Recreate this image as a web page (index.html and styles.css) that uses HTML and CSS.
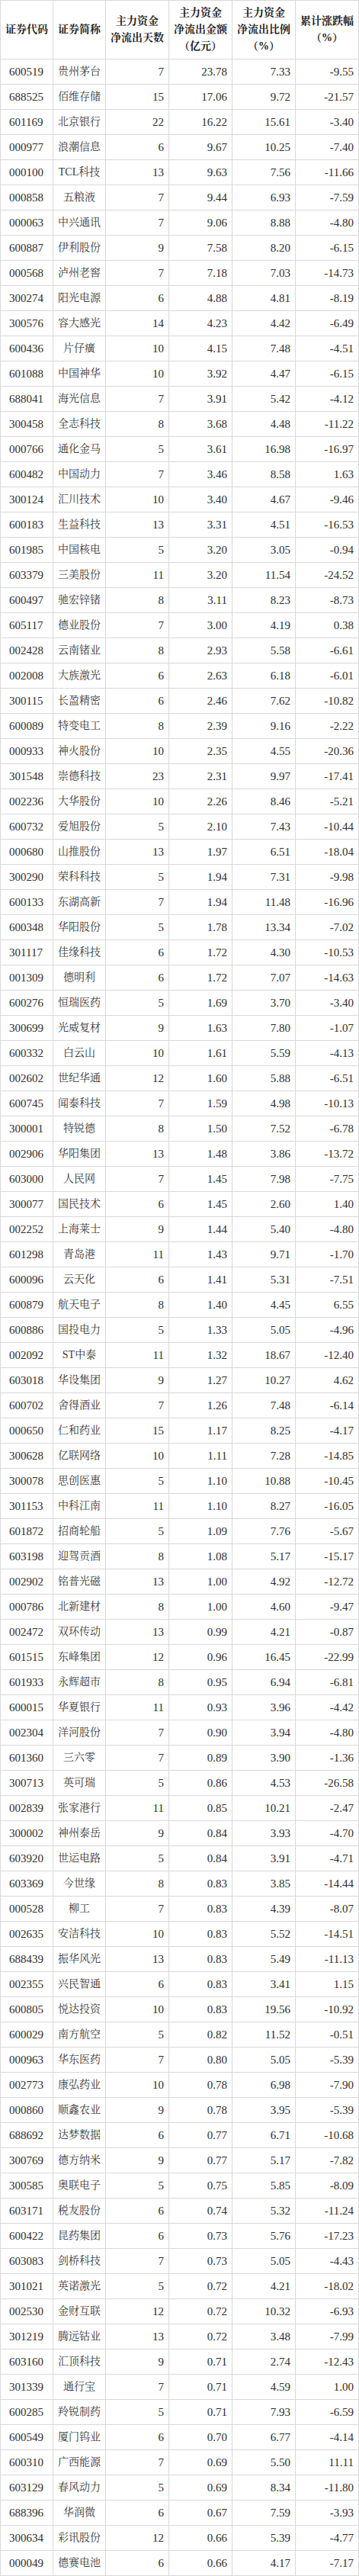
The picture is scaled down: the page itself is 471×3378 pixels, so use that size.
FILE: index.html
```html
<!DOCTYPE html>
<html lang="zh-CN">
<head>
<meta charset="utf-8">
<title>主力资金净流出</title>
<link rel="stylesheet" href="styles.css">
</head>
<body>
<table class="flow">
<colgroup>
<col class="c-code"><col class="c-name"><col class="c-num"><col class="c-num"><col class="c-num"><col class="c-num">
</colgroup>
<thead>
<tr><th>证券代码</th><th>证券简称</th><th>主力资金<br>净流出天数</th><th>主力资金<br>净流出金额<br>（亿元）</th><th>主力资金<br>净流出比例<br>（%）</th><th>累计涨跌幅<br>（%）</th></tr>
</thead>
<tbody>
<tr><td class="code">600519</td><td class="name">贵州茅台</td><td>7</td><td>23.78</td><td>7.33</td><td>-9.55</td></tr>
<tr><td class="code">688525</td><td class="name">佰维存储</td><td>15</td><td>17.06</td><td>9.72</td><td>-21.57</td></tr>
<tr><td class="code">601169</td><td class="name">北京银行</td><td>22</td><td>16.22</td><td>15.61</td><td>-3.40</td></tr>
<tr><td class="code">000977</td><td class="name">浪潮信息</td><td>6</td><td>9.67</td><td>10.25</td><td>-7.40</td></tr>
<tr><td class="code">000100</td><td class="name">TCL科技</td><td>13</td><td>9.63</td><td>7.56</td><td>-11.66</td></tr>
<tr><td class="code">000858</td><td class="name">五粮液</td><td>7</td><td>9.44</td><td>6.93</td><td>-7.59</td></tr>
<tr><td class="code">000063</td><td class="name">中兴通讯</td><td>7</td><td>9.06</td><td>8.88</td><td>-4.80</td></tr>
<tr><td class="code">600887</td><td class="name">伊利股份</td><td>9</td><td>7.58</td><td>8.20</td><td>-6.15</td></tr>
<tr><td class="code">000568</td><td class="name">泸州老窖</td><td>7</td><td>7.18</td><td>7.03</td><td>-14.73</td></tr>
<tr><td class="code">300274</td><td class="name">阳光电源</td><td>6</td><td>4.88</td><td>4.81</td><td>-8.19</td></tr>
<tr><td class="code">300576</td><td class="name">容大感光</td><td>14</td><td>4.23</td><td>4.42</td><td>-6.49</td></tr>
<tr><td class="code">600436</td><td class="name">片仔癀</td><td>10</td><td>4.15</td><td>7.48</td><td>-4.51</td></tr>
<tr><td class="code">601088</td><td class="name">中国神华</td><td>10</td><td>3.92</td><td>4.47</td><td>-6.15</td></tr>
<tr><td class="code">688041</td><td class="name">海光信息</td><td>7</td><td>3.91</td><td>5.42</td><td>-4.12</td></tr>
<tr><td class="code">300458</td><td class="name">全志科技</td><td>8</td><td>3.68</td><td>4.48</td><td>-11.22</td></tr>
<tr><td class="code">000766</td><td class="name">通化金马</td><td>5</td><td>3.61</td><td>16.98</td><td>-16.97</td></tr>
<tr><td class="code">600482</td><td class="name">中国动力</td><td>7</td><td>3.46</td><td>8.58</td><td>1.63</td></tr>
<tr><td class="code">300124</td><td class="name">汇川技术</td><td>10</td><td>3.40</td><td>4.67</td><td>-9.46</td></tr>
<tr><td class="code">600183</td><td class="name">生益科技</td><td>13</td><td>3.31</td><td>4.51</td><td>-16.53</td></tr>
<tr><td class="code">601985</td><td class="name">中国核电</td><td>5</td><td>3.20</td><td>3.05</td><td>-0.94</td></tr>
<tr><td class="code">603379</td><td class="name">三美股份</td><td>11</td><td>3.20</td><td>11.54</td><td>-24.52</td></tr>
<tr><td class="code">600497</td><td class="name">驰宏锌锗</td><td>8</td><td>3.11</td><td>8.23</td><td>-8.73</td></tr>
<tr><td class="code">605117</td><td class="name">德业股份</td><td>7</td><td>3.00</td><td>4.19</td><td>0.38</td></tr>
<tr><td class="code">002428</td><td class="name">云南锗业</td><td>8</td><td>2.93</td><td>5.58</td><td>-6.61</td></tr>
<tr><td class="code">002008</td><td class="name">大族激光</td><td>6</td><td>2.63</td><td>6.18</td><td>-6.01</td></tr>
<tr><td class="code">300115</td><td class="name">长盈精密</td><td>6</td><td>2.46</td><td>7.62</td><td>-10.82</td></tr>
<tr><td class="code">600089</td><td class="name">特变电工</td><td>8</td><td>2.39</td><td>9.16</td><td>-2.22</td></tr>
<tr><td class="code">000933</td><td class="name">神火股份</td><td>10</td><td>2.35</td><td>4.55</td><td>-20.36</td></tr>
<tr><td class="code">301548</td><td class="name">崇德科技</td><td>23</td><td>2.31</td><td>9.97</td><td>-17.41</td></tr>
<tr><td class="code">002236</td><td class="name">大华股份</td><td>10</td><td>2.26</td><td>8.46</td><td>-5.21</td></tr>
<tr><td class="code">600732</td><td class="name">爱旭股份</td><td>5</td><td>2.10</td><td>7.43</td><td>-10.44</td></tr>
<tr><td class="code">000680</td><td class="name">山推股份</td><td>13</td><td>1.97</td><td>6.51</td><td>-18.04</td></tr>
<tr><td class="code">300290</td><td class="name">荣科科技</td><td>5</td><td>1.94</td><td>7.31</td><td>-9.98</td></tr>
<tr><td class="code">600133</td><td class="name">东湖高新</td><td>7</td><td>1.94</td><td>11.48</td><td>-16.96</td></tr>
<tr><td class="code">600348</td><td class="name">华阳股份</td><td>5</td><td>1.78</td><td>13.34</td><td>-7.02</td></tr>
<tr><td class="code">301117</td><td class="name">佳缘科技</td><td>6</td><td>1.72</td><td>4.30</td><td>-10.53</td></tr>
<tr><td class="code">001309</td><td class="name">德明利</td><td>6</td><td>1.72</td><td>7.07</td><td>-14.63</td></tr>
<tr><td class="code">600276</td><td class="name">恒瑞医药</td><td>5</td><td>1.69</td><td>3.70</td><td>-3.40</td></tr>
<tr><td class="code">300699</td><td class="name">光威复材</td><td>9</td><td>1.63</td><td>7.80</td><td>-1.07</td></tr>
<tr><td class="code">600332</td><td class="name">白云山</td><td>10</td><td>1.61</td><td>5.59</td><td>-4.13</td></tr>
<tr><td class="code">002602</td><td class="name">世纪华通</td><td>12</td><td>1.60</td><td>5.88</td><td>-6.51</td></tr>
<tr><td class="code">600745</td><td class="name">闻泰科技</td><td>7</td><td>1.59</td><td>4.98</td><td>-10.13</td></tr>
<tr><td class="code">300001</td><td class="name">特锐德</td><td>8</td><td>1.50</td><td>7.52</td><td>-6.78</td></tr>
<tr><td class="code">002906</td><td class="name">华阳集团</td><td>13</td><td>1.48</td><td>3.86</td><td>-13.72</td></tr>
<tr><td class="code">603000</td><td class="name">人民网</td><td>7</td><td>1.45</td><td>7.98</td><td>-7.75</td></tr>
<tr><td class="code">300077</td><td class="name">国民技术</td><td>6</td><td>1.45</td><td>2.60</td><td>1.40</td></tr>
<tr><td class="code">002252</td><td class="name">上海莱士</td><td>9</td><td>1.44</td><td>5.40</td><td>-4.80</td></tr>
<tr><td class="code">601298</td><td class="name">青岛港</td><td>11</td><td>1.43</td><td>9.71</td><td>-1.70</td></tr>
<tr><td class="code">600096</td><td class="name">云天化</td><td>6</td><td>1.41</td><td>5.31</td><td>-7.51</td></tr>
<tr><td class="code">600879</td><td class="name">航天电子</td><td>8</td><td>1.40</td><td>4.45</td><td>6.55</td></tr>
<tr><td class="code">600886</td><td class="name">国投电力</td><td>5</td><td>1.33</td><td>5.05</td><td>-4.96</td></tr>
<tr><td class="code">002092</td><td class="name">ST中泰</td><td>11</td><td>1.32</td><td>18.67</td><td>-12.40</td></tr>
<tr><td class="code">603018</td><td class="name">华设集团</td><td>9</td><td>1.27</td><td>10.27</td><td>4.62</td></tr>
<tr><td class="code">600702</td><td class="name">舍得酒业</td><td>7</td><td>1.26</td><td>7.48</td><td>-6.14</td></tr>
<tr><td class="code">000650</td><td class="name">仁和药业</td><td>15</td><td>1.17</td><td>8.25</td><td>-4.17</td></tr>
<tr><td class="code">300628</td><td class="name">亿联网络</td><td>10</td><td>1.11</td><td>7.28</td><td>-14.85</td></tr>
<tr><td class="code">300078</td><td class="name">思创医惠</td><td>5</td><td>1.10</td><td>10.88</td><td>-10.45</td></tr>
<tr><td class="code">301153</td><td class="name">中科江南</td><td>11</td><td>1.10</td><td>8.27</td><td>-16.05</td></tr>
<tr><td class="code">601872</td><td class="name">招商轮船</td><td>5</td><td>1.09</td><td>7.76</td><td>-5.67</td></tr>
<tr><td class="code">603198</td><td class="name">迎驾贡酒</td><td>8</td><td>1.08</td><td>5.17</td><td>-15.17</td></tr>
<tr><td class="code">002902</td><td class="name">铭普光磁</td><td>13</td><td>1.00</td><td>4.92</td><td>-12.72</td></tr>
<tr><td class="code">000786</td><td class="name">北新建材</td><td>8</td><td>1.00</td><td>4.60</td><td>-9.47</td></tr>
<tr><td class="code">002472</td><td class="name">双环传动</td><td>13</td><td>0.99</td><td>4.21</td><td>-0.87</td></tr>
<tr><td class="code">601515</td><td class="name">东峰集团</td><td>12</td><td>0.96</td><td>16.45</td><td>-22.99</td></tr>
<tr><td class="code">601933</td><td class="name">永辉超市</td><td>8</td><td>0.95</td><td>6.94</td><td>-6.81</td></tr>
<tr><td class="code">600015</td><td class="name">华夏银行</td><td>11</td><td>0.93</td><td>3.96</td><td>-4.42</td></tr>
<tr><td class="code">002304</td><td class="name">洋河股份</td><td>7</td><td>0.90</td><td>3.94</td><td>-4.80</td></tr>
<tr><td class="code">601360</td><td class="name">三六零</td><td>7</td><td>0.89</td><td>3.90</td><td>-1.36</td></tr>
<tr><td class="code">300713</td><td class="name">英可瑞</td><td>5</td><td>0.86</td><td>4.53</td><td>-26.58</td></tr>
<tr><td class="code">002839</td><td class="name">张家港行</td><td>11</td><td>0.85</td><td>10.21</td><td>-2.47</td></tr>
<tr><td class="code">300002</td><td class="name">神州泰岳</td><td>9</td><td>0.84</td><td>3.93</td><td>-4.70</td></tr>
<tr><td class="code">603920</td><td class="name">世运电路</td><td>5</td><td>0.84</td><td>3.91</td><td>-4.71</td></tr>
<tr><td class="code">603369</td><td class="name">今世缘</td><td>8</td><td>0.83</td><td>3.85</td><td>-14.44</td></tr>
<tr><td class="code">000528</td><td class="name">柳工</td><td>7</td><td>0.83</td><td>4.39</td><td>-8.07</td></tr>
<tr><td class="code">002635</td><td class="name">安洁科技</td><td>10</td><td>0.83</td><td>5.52</td><td>-14.51</td></tr>
<tr><td class="code">688439</td><td class="name">振华风光</td><td>13</td><td>0.83</td><td>5.49</td><td>-11.13</td></tr>
<tr><td class="code">002355</td><td class="name">兴民智通</td><td>6</td><td>0.83</td><td>3.41</td><td>1.15</td></tr>
<tr><td class="code">600805</td><td class="name">悦达投资</td><td>10</td><td>0.83</td><td>19.56</td><td>-10.92</td></tr>
<tr><td class="code">600029</td><td class="name">南方航空</td><td>5</td><td>0.82</td><td>11.52</td><td>-0.51</td></tr>
<tr><td class="code">000963</td><td class="name">华东医药</td><td>7</td><td>0.80</td><td>5.05</td><td>-5.39</td></tr>
<tr><td class="code">002773</td><td class="name">康弘药业</td><td>10</td><td>0.78</td><td>6.98</td><td>-7.90</td></tr>
<tr><td class="code">000860</td><td class="name">顺鑫农业</td><td>9</td><td>0.78</td><td>3.95</td><td>-5.39</td></tr>
<tr><td class="code">688692</td><td class="name">达梦数据</td><td>6</td><td>0.77</td><td>6.71</td><td>-10.68</td></tr>
<tr><td class="code">300769</td><td class="name">德方纳米</td><td>9</td><td>0.77</td><td>5.17</td><td>-7.82</td></tr>
<tr><td class="code">300585</td><td class="name">奥联电子</td><td>5</td><td>0.75</td><td>5.85</td><td>-8.09</td></tr>
<tr><td class="code">603171</td><td class="name">税友股份</td><td>6</td><td>0.74</td><td>5.32</td><td>-11.24</td></tr>
<tr><td class="code">600422</td><td class="name">昆药集团</td><td>6</td><td>0.73</td><td>5.76</td><td>-17.23</td></tr>
<tr><td class="code">603083</td><td class="name">剑桥科技</td><td>7</td><td>0.73</td><td>5.05</td><td>-4.43</td></tr>
<tr><td class="code">301021</td><td class="name">英诺激光</td><td>5</td><td>0.72</td><td>4.21</td><td>-18.02</td></tr>
<tr><td class="code">002530</td><td class="name">金财互联</td><td>12</td><td>0.72</td><td>10.32</td><td>-6.93</td></tr>
<tr><td class="code">301219</td><td class="name">腾远钴业</td><td>13</td><td>0.72</td><td>3.48</td><td>-7.99</td></tr>
<tr><td class="code">603160</td><td class="name">汇顶科技</td><td>9</td><td>0.71</td><td>2.74</td><td>-12.43</td></tr>
<tr><td class="code">301339</td><td class="name">通行宝</td><td>7</td><td>0.71</td><td>4.59</td><td>1.00</td></tr>
<tr><td class="code">600285</td><td class="name">羚锐制药</td><td>5</td><td>0.71</td><td>7.93</td><td>-6.59</td></tr>
<tr><td class="code">600549</td><td class="name">厦门钨业</td><td>6</td><td>0.70</td><td>6.77</td><td>-4.14</td></tr>
<tr><td class="code">600310</td><td class="name">广西能源</td><td>7</td><td>0.69</td><td>5.50</td><td>11.11</td></tr>
<tr><td class="code">603129</td><td class="name">春风动力</td><td>5</td><td>0.69</td><td>8.34</td><td>-11.80</td></tr>
<tr><td class="code">688396</td><td class="name">华润微</td><td>6</td><td>0.67</td><td>7.59</td><td>-3.93</td></tr>
<tr><td class="code">300634</td><td class="name">彩讯股份</td><td>12</td><td>0.66</td><td>5.39</td><td>-4.77</td></tr>
<tr><td class="code">000049</td><td class="name">德赛电池</td><td>6</td><td>0.66</td><td>4.17</td><td>-7.17</td></tr>
</tbody>
</table>
</body>
</html>
```
FILE: styles.css
```css
html, body {
  margin: 0;
  padding: 0;
  background: #ffffff;
}

.flow {
  table-layout: fixed;
  width: 471px;
  border-collapse: separate;
  border-spacing: 1px;
  background: #d9d9d9;
  font-family: "Liberation Serif", "Noto Serif CJK SC", "Noto Sans CJK SC", serif;
  color: #2e2e2e;
}

.c-code { width: 68px; }
.c-name { width: 68px; }
.c-num { width: 82px; }

.flow th {
  background: #ffffff;
  height: 76px;
  padding: 0 2px;
  font-size: 14px;
  line-height: 22px;
  font-weight: bold;
  color: #222222;
  text-align: center;
  vertical-align: middle;
  white-space: nowrap;
}

.flow td {
  background: #ffffff;
  height: 32px;
  padding: 0 6px 0 0;
  font-size: 15px;
  line-height: 32px;
  text-align: right;
  vertical-align: middle;
  white-space: nowrap;
}

.flow td.code {
  text-align: left;
  padding: 0 0 0 11px;
}

.flow td.name {
  text-align: center;
  padding: 0;
  font-size: 14px;
  color: #3a3a3a;
}
```
